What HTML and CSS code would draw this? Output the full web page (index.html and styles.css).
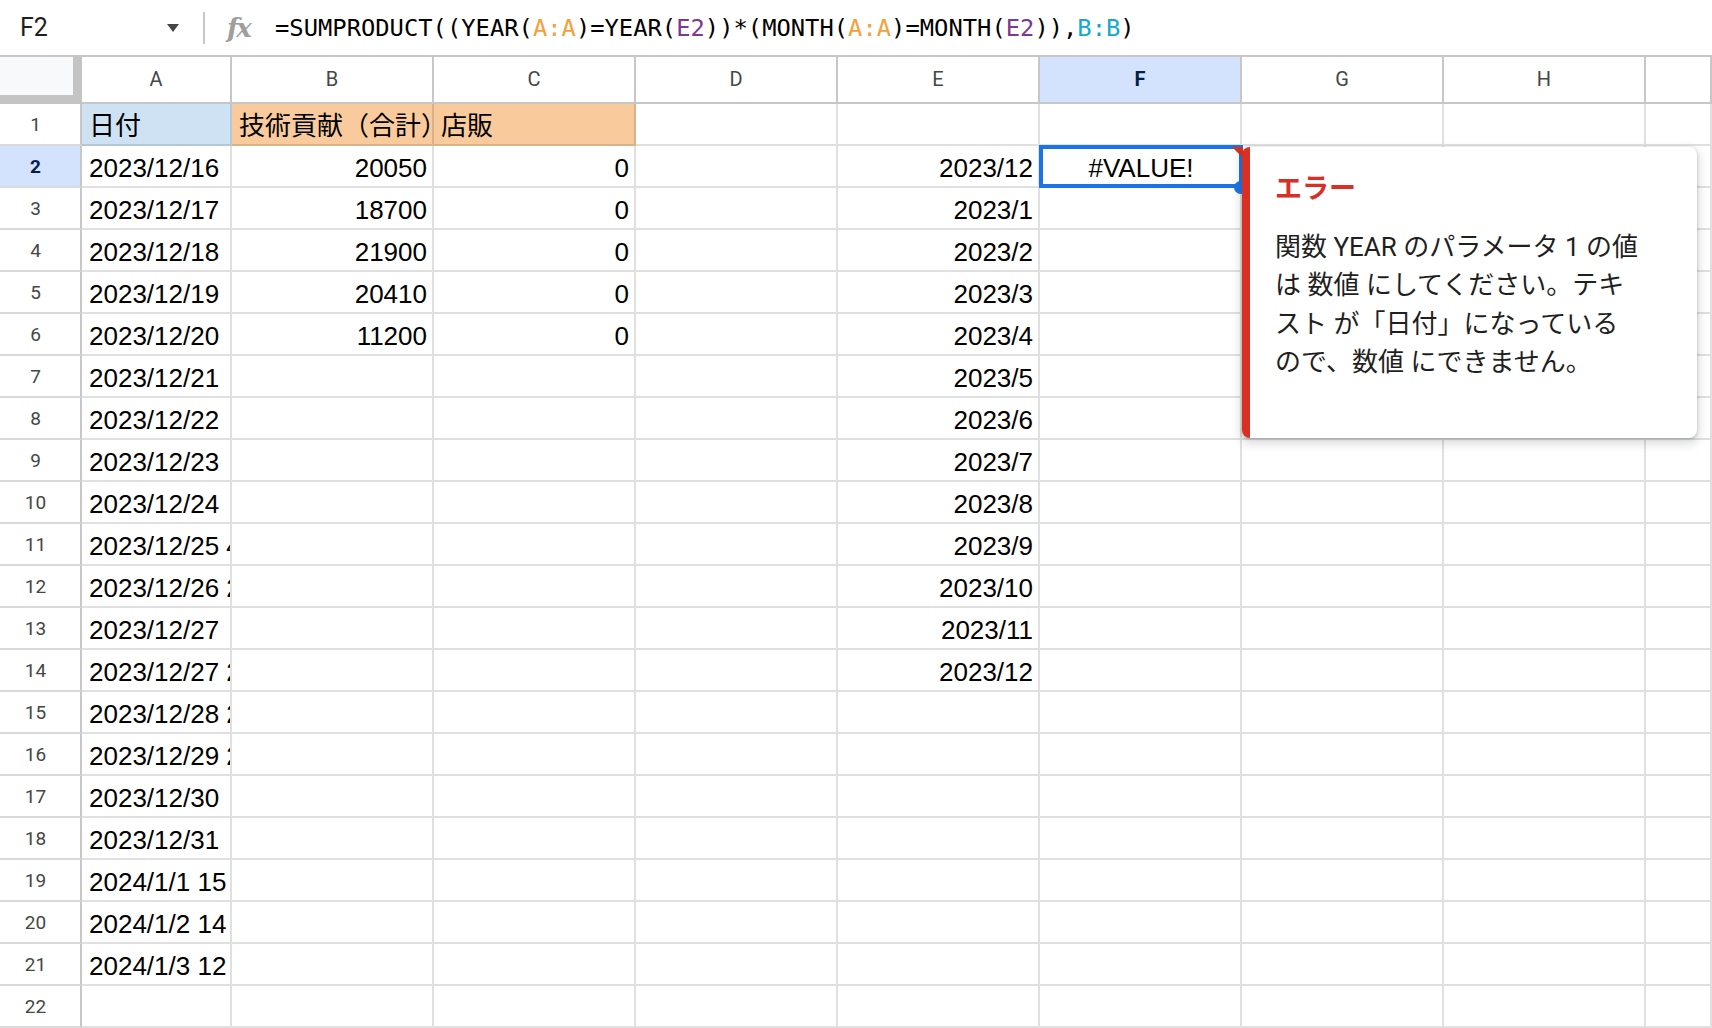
FILE: index.html
```html
<!DOCTYPE html>
<html lang="ja">
<head>
<meta charset="utf-8">
<title>Sheet</title>
<link rel="stylesheet" href="styles.css">
</head>
<body>
<div class="fbar">
  <div class="namebox"><span>F2</span><span class="caret"></span></div>
  <div class="sep"></div>
  <div class="fx">fx</div>
  <div class="formula">=SUMPRODUCT((YEAR(<span class="o">A:A</span>)=YEAR(<span class="p">E2</span>))*(MONTH(<span class="o">A:A</span>)=MONTH(<span class="p">E2</span>)),<span class="b">B:B</span>)</div>
</div>
<div class="grid">
  <div class="corner"><div></div></div>
  <div class="ch">A</div><div class="ch">B</div><div class="ch">C</div><div class="ch">D</div><div class="ch">E</div><div class="ch on">F</div><div class="ch">G</div><div class="ch">H</div><div class="ch"></div>

  <div class="rh">1</div><div class="c blue">日付</div><div class="c org">技術貢献（合計）</div><div class="c org">店販</div><div class="c"></div><div class="c"></div><div class="c"></div><div class="c"></div><div class="c"></div><div class="c"></div>

  <div class="rh on">2</div><div class="c">2023/12/16</div><div class="c n">20050</div><div class="c n">0</div><div class="c"></div><div class="c n">2023/12</div>
  <div class="c sel">#VALUE!<div class="selbox"></div><div class="tri"></div><div class="handle"></div></div>
  <div class="c"></div><div class="c"></div><div class="c"></div>

  <div class="rh">3</div><div class="c">2023/12/17</div><div class="c n">18700</div><div class="c n">0</div><div class="c"></div><div class="c n">2023/1</div><div class="c"></div><div class="c"></div><div class="c"></div><div class="c"></div>
  <div class="rh">4</div><div class="c">2023/12/18</div><div class="c n">21900</div><div class="c n">0</div><div class="c"></div><div class="c n">2023/2</div><div class="c"></div><div class="c"></div><div class="c"></div><div class="c"></div>
  <div class="rh">5</div><div class="c">2023/12/19</div><div class="c n">20410</div><div class="c n">0</div><div class="c"></div><div class="c n">2023/3</div><div class="c"></div><div class="c"></div><div class="c"></div><div class="c"></div>
  <div class="rh">6</div><div class="c">2023/12/20</div><div class="c n">11200</div><div class="c n">0</div><div class="c"></div><div class="c n">2023/4</div><div class="c"></div><div class="c"></div><div class="c"></div><div class="c"></div>
  <div class="rh">7</div><div class="c">2023/12/21</div><div class="c"></div><div class="c"></div><div class="c"></div><div class="c n">2023/5</div><div class="c"></div><div class="c"></div><div class="c"></div><div class="c"></div>
  <div class="rh">8</div><div class="c">2023/12/22</div><div class="c"></div><div class="c"></div><div class="c"></div><div class="c n">2023/6</div><div class="c"></div><div class="c"></div><div class="c"></div><div class="c"></div>
  <div class="rh">9</div><div class="c">2023/12/23</div><div class="c"></div><div class="c"></div><div class="c"></div><div class="c n">2023/7</div><div class="c"></div><div class="c"></div><div class="c"></div><div class="c"></div>
  <div class="rh">10</div><div class="c">2023/12/24</div><div class="c"></div><div class="c"></div><div class="c"></div><div class="c n">2023/8</div><div class="c"></div><div class="c"></div><div class="c"></div><div class="c"></div>
  <div class="rh">11</div><div class="c">2023/12/25 4:00:00</div><div class="c"></div><div class="c"></div><div class="c"></div><div class="c n">2023/9</div><div class="c"></div><div class="c"></div><div class="c"></div><div class="c"></div>
  <div class="rh">12</div><div class="c">2023/12/26 2:00:00</div><div class="c"></div><div class="c"></div><div class="c"></div><div class="c n">2023/10</div><div class="c"></div><div class="c"></div><div class="c"></div><div class="c"></div>
  <div class="rh">13</div><div class="c">2023/12/27</div><div class="c"></div><div class="c"></div><div class="c"></div><div class="c n">2023/11</div><div class="c"></div><div class="c"></div><div class="c"></div><div class="c"></div>
  <div class="rh">14</div><div class="c">2023/12/27 2:00:00</div><div class="c"></div><div class="c"></div><div class="c"></div><div class="c n">2023/12</div><div class="c"></div><div class="c"></div><div class="c"></div><div class="c"></div>
  <div class="rh">15</div><div class="c">2023/12/28 2:00:00</div><div class="c"></div><div class="c"></div><div class="c"></div><div class="c"></div><div class="c"></div><div class="c"></div><div class="c"></div><div class="c"></div>
  <div class="rh">16</div><div class="c">2023/12/29 2:00:00</div><div class="c"></div><div class="c"></div><div class="c"></div><div class="c"></div><div class="c"></div><div class="c"></div><div class="c"></div><div class="c"></div>
  <div class="rh">17</div><div class="c">2023/12/30</div><div class="c"></div><div class="c"></div><div class="c"></div><div class="c"></div><div class="c"></div><div class="c"></div><div class="c"></div><div class="c"></div>
  <div class="rh">18</div><div class="c">2023/12/31</div><div class="c"></div><div class="c"></div><div class="c"></div><div class="c"></div><div class="c"></div><div class="c"></div><div class="c"></div><div class="c"></div>
  <div class="rh">19</div><div class="c">2024/1/1 15</div><div class="c"></div><div class="c"></div><div class="c"></div><div class="c"></div><div class="c"></div><div class="c"></div><div class="c"></div><div class="c"></div>
  <div class="rh">20</div><div class="c">2024/1/2 14</div><div class="c"></div><div class="c"></div><div class="c"></div><div class="c"></div><div class="c"></div><div class="c"></div><div class="c"></div><div class="c"></div>
  <div class="rh">21</div><div class="c">2024/1/3 12</div><div class="c"></div><div class="c"></div><div class="c"></div><div class="c"></div><div class="c"></div><div class="c"></div><div class="c"></div><div class="c"></div>
  <div class="rh">22</div><div class="c"></div><div class="c"></div><div class="c"></div><div class="c"></div><div class="c"></div><div class="c"></div><div class="c"></div><div class="c"></div><div class="c"></div>
</div>

<div class="card">
  <div class="card-title">エラー</div>
  <div class="card-body">関数 YEAR のパラメータ 1 の値<br>は 数値 にしてください。テキ<br>スト が「日付」になっている<br>ので、数値 にできません。</div>
</div>
</body>
</html>
```

FILE: styles.css
```css
* { box-sizing: border-box; }
html, body { margin: 0; padding: 0; }
body {
  width: 1712px;
  height: 1028px;
  overflow: hidden;
  background: #fff;
  position: relative;
  font-family: "Liberation Sans", "Noto Sans CJK JP", sans-serif;
  color: #000;
}

/* formula bar */
.fbar {
  height: 57px;
  border-bottom: 2px solid #c7c7c7;
  display: flex;
  align-items: center;
}
.namebox {
  width: 190px;
  height: 100%;
  display: flex;
  align-items: center;
  justify-content: space-between;
  padding: 0 11px 0 20px;
  font-family: Roboto, sans-serif;
  font-size: 25px;
  color: #1f1f1f;
}
.caret {
  width: 0;
  height: 0;
  border-left: 6.5px solid transparent;
  border-right: 6.5px solid transparent;
  border-top: 8px solid #444746;
}
.sep {
  width: 2px;
  height: 32px;
  background: #c7c7c7;
  margin-left: 13px;
}
.fx {
  width: 48px;
  margin-left: 22px;
  font-family: "DejaVu Serif", serif;
  font-style: italic;
  font-weight: bold;
  font-size: 26px;
  letter-spacing: -2px;
  color: #9e9e9e;
  line-height: 30px;
}
.formula {
  font-family: "DejaVu Sans Mono", monospace;
  font-size: 23.8px;
  color: #000;
  white-space: nowrap;
}
.formula .o { color: #f5a03a; }
.formula .p { color: #7e3794; }
.formula .b { color: #11a9cc; }

/* grid */
.grid {
  display: grid;
  grid-template-columns: 82px 150px repeat(7, 202px) 66px;
  grid-template-rows: 47px repeat(22, 42px);
}
.corner { background: #c4c4c4; }
.corner div { width: 73px; height: 38px; background: #f8f9fa; }
.ch {
  border-right: 2px solid #c7c7c7;
  border-bottom: 2px solid #c7c7c7;
  text-align: center;
  line-height: 45px;
  font-family: Roboto, sans-serif;
  font-size: 20px;
  color: #444746;
}
.ch.on, .rh.on {
  background: #d3e3fd;
  color: #041e49;
  font-weight: bold;
}
.rh {
  border-right: 2px solid #c7c7c7;
  border-bottom: 2px solid #dadada;
  text-align: center;
  padding: 2px 9px 0 0;
  line-height: 38px;
  font-family: Roboto, sans-serif;
  font-size: 19px;
  color: #444746;
}
.c {
  border-right: 2px solid rgba(0, 0, 0, 0.12);
  border-bottom: 2px solid rgba(0, 0, 0, 0.12);
  padding: 2px 5px 0 7px;
  line-height: 40px;
  font-size: 26px;
  white-space: nowrap;
  overflow: hidden;
}
.c.n { text-align: right; }
.c.blue { background: #cfe2f3; }
.c.org { background: #f9cb9c; }
.c.sel {
  overflow: visible;
  position: relative;
  text-align: center;
}
.selbox {
  position: absolute;
  left: -1px;
  top: -1px;
  width: 204px;
  height: 43px;
  border: 4px solid #1a73e8;
}
.tri {
  position: absolute;
  right: -3px;
  top: 1px;
  width: 0;
  height: 0;
  border-top: 11px solid #d93025;
  border-left: 11px solid transparent;
}
.handle {
  position: absolute;
  left: 194px;
  top: 35px;
  width: 13px;
  height: 13px;
  border-radius: 50%;
  background: #1a73e8;
}

/* error tooltip */
.card {
  position: absolute;
  left: 1242px;
  top: 147px;
  width: 455px;
  height: 291px;
  z-index: 5;
  background: #fff;
  border-left: 8px solid #d93025;
  border-radius: 8px;
  box-shadow: 0 1px 3px rgba(60, 64, 67, 0.3), 0 4px 8px 3px rgba(60, 64, 67, 0.15);
  padding: 24px 20px 0 25px;
  font-family: Roboto, "Noto Sans CJK JP", sans-serif;
  white-space: nowrap;
}
.card-title {
  font-size: 27px;
  font-weight: bold;
  line-height: 36px;
  color: #d93025;
}
.card-body {
  margin-top: 21px;
  font-size: 26px;
  line-height: 38.4px;
  color: #1f1f1f;
}
```
